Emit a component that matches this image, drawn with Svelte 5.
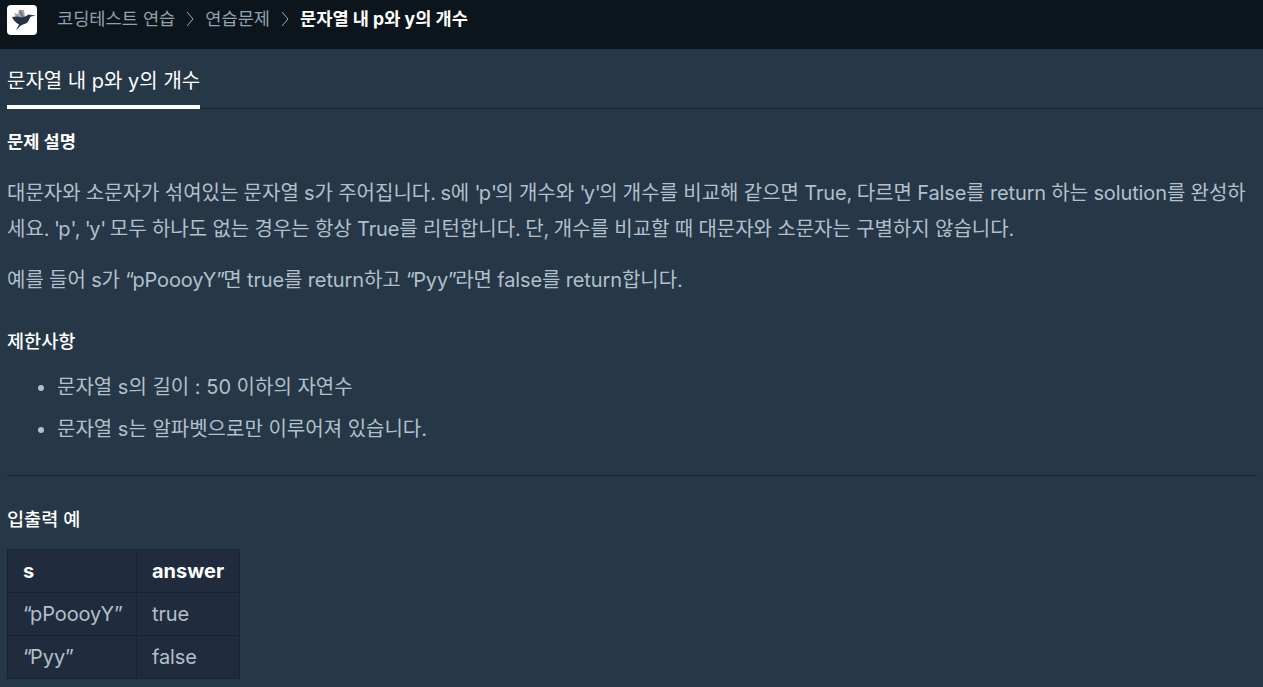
<script>
  const crumbs = ['코딩테스트 연습', '연습문제'];
  const title = '문자열 내 p와 y의 개수';
  const paragraphs = [
    [
      "대문자와 소문자가 섞여있는 문자열 s가 주어집니다. s에 'p'의 개수와 'y'의 개수를 비교해 같으면 True, 다르면 False를 return 하는 solution를 완성하",
      "세요. 'p', 'y' 모두 하나도 없는 경우는 항상 True를 리턴합니다. 단, 개수를 비교할 때 대문자와 소문자는 구별하지 않습니다."
    ],
    ['예를 들어 s가 “pPoooyY”면 true를 return하고 “Pyy”라면 false를 return합니다.']
  ];
  const rules = ['문자열 s의 길이 : 50 이하의 자연수', '문자열 s는 알파벳으로만 이루어져 있습니다.'];
  const rows = [['“pPoooyY”', 'true'], ['“Pyy”', 'false']];

  // Splits text into quotes, punctuation, Latin words and the rest, so each kind can be tracked separately.
  const split = (text) => text.match(/['“”]|[.,]|[A-Za-z]+|[^'“”.,A-Za-z]+/g);
  const kind = (part) => (/['“”]/.test(part) ? 'quote' : /[.,]/.test(part) ? 'punct' : /[A-Za-z]/.test(part) ? 'latin' : 'hangul');
</script>

{#snippet tracked(text)}{#each split(text) as part}<span class={kind(part)}>{part}</span>{/each}{/snippet}

<div class="page">
  <header>
    <svg class="logo" viewBox="0 0 30 30"><rect width="30" height="30" rx="4" fill="#fff"/><path d="M7 8 L11 9 L12 5 L17 5 L18 12 L15 14 L9 12 Z" fill="#a5a9af"/><path d="M12 6 L14 5 L17 12 L15 13 Z" fill="#747983"/><path d="M5 12 Q10 11 15 12.5 Q18 12 20 10.5 Q22 8.6 24 10 L29 10.5 L24 11.5 Q22.5 12.5 22 15 Q20.5 18.5 16 19.5 Q13 20.5 11 23.5 L9 25.5 L12 19.5 Q7 17 5 12 Z" fill="#263247"/></svg>
    <nav>
      {#each crumbs as c}
        <span class="crumb">{c}</span>
        <svg class="chev" viewBox="0 0 8 16"><path d="M1 1 L7 8 L1 15" fill="none" stroke="#98a8b9" stroke-width="1"/></svg>
      {/each}
      <b>{title}</b>
    </nav>
  </header>
  <div class="tabs"><span class="tab">{title}</span></div>
  <main>
    <h1>문제 설명</h1>
    {#each paragraphs as lines}
      <p>{#each lines as line, i}{#if i}<br />{/if}{@render tracked(line)}{/each}</p>
    {/each}
    <h2>제한사항</h2>
    <ul>{#each rules as r}<li>{r}</li>{/each}</ul>
    <hr />
    <h2 class="ex">입출력 예</h2>
    <table>
      <thead><tr><th>s</th><th>answer</th></tr></thead>
      <tbody>{#each rows as r}<tr>{#each r as cell}<td>{@render tracked(cell)}</td>{/each}</tr>{/each}</tbody>
    </table>
  </main>
</div>

<style>
  :global(body) { background: #263747; }
  .page { height: 687px; overflow: hidden; font-family: Inter, "Noto Sans CJK KR", sans-serif; color: #b2c0cc; background: #263747; }
  header { height: 49px; background: #0c151c; display: flex; padding: 5px 7px; box-sizing: border-box; }
  .logo { width: 30px; height: 30px; }
  nav { display: flex; align-items: center; height: 26px; margin-left: 20px; font-size: 17.6px; color: #8fa2b3; white-space: nowrap; }
  .crumb, b { position: relative; top: -1px; }
  .chev { width: 8px; height: 16px; margin: 2px 11px 0; }
  b { color: #fff; }
  .tabs { margin-left: 7px; height: 59px; display: flex; border-bottom: 1px solid #172334; }
  .tab { height: 56px; line-height: 64px; font-size: 20px; color: #fff; border-bottom: 4px solid #fff; white-space: nowrap; }
  main { padding: 0 6px 0 7px; }
  h1, h2 { margin: 0; color: #fff; font-size: 17.6px; line-height: 26px; }
  h1 { margin-top: 20px; }
  h2 { font-size: 18.6px; font-weight: 500; margin-top: 30px; }
  p { margin: 20px 0 0; font-size: 20px; line-height: 36px; white-space: nowrap; word-spacing: -0.35px; }
  p + p { margin-top: 15px; }
  .quote { letter-spacing: -1.7px; }
  .punct { letter-spacing: -0.9px; }
  .latin { letter-spacing: -0.12px; }
  ul { margin: 15px 0 0; padding-left: 50px; font-size: 20px; }
  li { line-height: 36px; margin-bottom: 6px; }
  hr { border: 0; border-top: 1px solid #172334; margin: 28px 0 0; }
  table { margin-top: 17px; border-collapse: collapse; width: 233px; background: #202b3d; font-size: 20px; table-layout: fixed; }
  th, td { border: 1px solid #172334; height: 43px; padding: 0 15px; box-sizing: border-box; text-align: left; }
  th:first-child { width: 129px; }
  th { color: #fff; }
</style>
